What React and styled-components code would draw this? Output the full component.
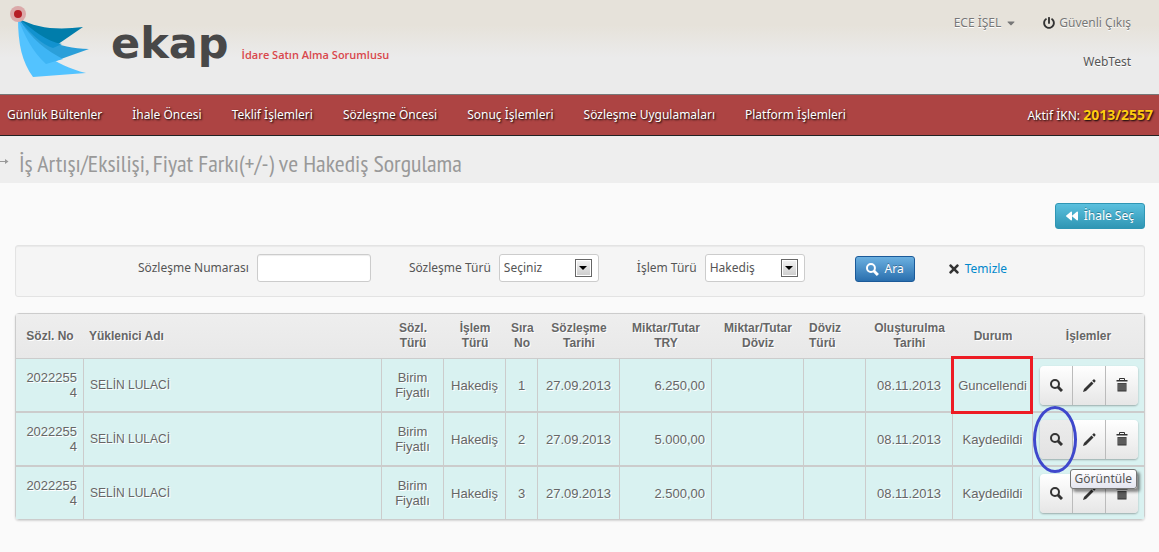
import React from "react";
import styled, { createGlobalStyle } from "styled-components";
import {
  FaBackward,
  FaCaretDown,
  FaPowerOff,
  FaTimes,
} from "react-icons/fa";

const GlobalStyle = createGlobalStyle`
  * {
    box-sizing: border-box;
  }

  body {
    margin: 0;
    background: #fafafa;
    color: #555;
    font-family: "Noto Sans", "Open Sans", sans-serif;
    font-size: 12px;
    line-height: 20px;
  }
`;

const Header = styled.header`
  display: flex;
  height: 94px;
  padding: 6px 28px 0 9px;
  background: linear-gradient(#e6e2da, #e6e2da 25px, #ebebeb 58px);
`;

const Brand = styled.a`
  display: flex;
  color: #484848;
  text-decoration: none;
`;

const BrandName = styled.span`
  margin: 12px 0 0 21px;
  font-family: "DejaVu Sans", sans-serif;
  font-weight: bold;
  font-size: 43px;
  line-height: 50px;
`;

const Role = styled.span`
  margin: 39px 0 0 13px;
  font-family: "Open Sans", sans-serif;
  font-weight: 600;
  font-size: 11px;
  color: #d9474c;
`;

const UserArea = styled.div`
  display: flex;
  flex-direction: column;
  align-items: flex-end;
  gap: 19px;
  margin-left: auto;
  padding-top: 7px;
  text-shadow: 0 1px 0 #fff;
`;

const UserLinks = styled.div`
  display: flex;
  gap: 26px;
`;

const UserLink = styled.a`
  display: flex;
  align-items: center;
  gap: 4px;
  color: #777;
  text-decoration: none;
`;

const Nav = styled.nav`
  display: flex;
  align-items: center;
  gap: 30px;
  height: 42px;
  padding: 0 6px 0 7px;
  background: #ad4443;
  border-top: 1px solid #777;
  border-bottom: 1px solid #222;
  color: #fff;
  text-shadow: 1px 1px 2px #000;
`;

const NavLink = styled.a`
  color: inherit;
  text-decoration: none;
  white-space: nowrap;
`;

const ActiveTender = styled.span`
  margin-left: auto;
  white-space: nowrap;

  strong {
    font-size: 14px;
    color: #fc1;
  }
`;

const TitleBar = styled.div`
  display: flex;
  align-items: center;
  gap: 10px;
  height: 47px;
  background: #eee;
  color: #999;

  svg {
    margin-top: 4px;
  }
`;

const Title = styled.h1`
  margin: 0;
  padding-top: 8px;
  font-family: "PT Sans Narrow", "Open Sans Condensed", "Roboto Condensed", Roboto, sans-serif;
  font-weight: normal;
  font-size: 24px;
  line-height: 30px;
`;

const Content = styled.main`
  padding: 20px 14px 30px 15px;
`;

const Toolbar = styled.div`
  display: flex;
  justify-content: flex-end;
  margin-bottom: 16px;
`;

const buttonColors = {
  info: "linear-gradient(#5bc0de, #2f96b4)",
  primary: "linear-gradient(#6bb0e0, #2a6fae)",
};

const Button = styled.button`
  display: flex;
  align-items: center;
  justify-content: center;
  gap: 6px;
  height: 26px;
  padding: 0 10px;
  border: 1px solid ${(props) => (props.$kind === "info" ? "#2f96b4" : "#1b5a99")};
  border-radius: 3px;
  background: ${(props) => buttonColors[props.$kind]};
  color: #fff;
  font: inherit;
  text-shadow: 0 -1px 0 rgba(0, 0, 0, 0.3);
  cursor: pointer;
`;

const Filters = styled.form`
  display: flex;
  align-items: flex-start;
  height: 52px;
  padding: 8px 16px 0 122px;
  border: 1px solid #e3e3e3;
  border-radius: 3px;
  background: #f5f5f5;
  box-shadow: inset 0 1px 1px rgba(0, 0, 0, 0.05);
`;

const Field = styled.div`
  display: flex;
  align-items: center;
  gap: 8px;
  margin-right: 38px;

  label {
    white-space: nowrap;
  }
`;

const TextInput = styled.input`
  width: 114px;
  height: 28px;
  padding: 0 5px;
  border: 1px solid #ccc;
  border-radius: 3px;
  background: #fff;
  box-shadow: inset 0 1px 1px rgba(0, 0, 0, 0.075);
  color: #555;
  font: inherit;
`;

const SelectBox = styled.div`
  position: relative;

  select {
    display: block;
    width: 100px;
    height: 28px;
    padding: 0 28px 0 4px;
    appearance: none;
    border: 1px solid #ccc;
    border-radius: 3px;
    background: #fff;
    color: #555;
    font: inherit;
  }
`;

const SelectArrow = styled.span`
  position: absolute;
  top: 5px;
  right: 7px;
  display: flex;
  align-items: center;
  justify-content: center;
  width: 17px;
  height: 18px;
  border: 1px solid #666;
  background: linear-gradient(#f4f4f4, #ccc);
  box-shadow: inset 0 0 0 1px #fff;
  pointer-events: none;
`;

const SearchButton = styled(Button)`
  width: 60px;
  margin: 2px 32px 0 12px;
`;

const ClearLink = styled.a`
  display: flex;
  align-items: center;
  gap: 4px;
  margin-top: 5px;
  color: #0088cc;
  text-decoration: none;

  svg {
    color: #333;
  }
`;

const TableFrame = styled.div`
  margin-top: 16px;
  border: 1px solid #ccc;
  border-radius: 4px;
  box-shadow: 0 1px 2px rgba(0, 0, 0, 0.15);
`;

const Table = styled.table`
  width: 100%;
  table-layout: fixed;
  border-collapse: separate;
  border-spacing: 0;
  font-family: "Liberation Sans", Arial, sans-serif;
  font-size: 13px;
  line-height: 15px;
  color: #666;
  text-shadow: 1px 1px 0 #fff;
`;

const HeadCell = styled.th`
  height: 45px;
  padding: 0 5px;
  border-bottom: 1px solid #ccc;
  background: linear-gradient(#eee, #e8e8e8);
  font-size: 12px;
  text-align: ${(props) => props.$align || "center"};
`;

const Cell = styled.td`
  position: relative;
  height: 54px;
  padding: 0 6px;
  border-right: 1px solid #ccc;
  border-bottom: 2px solid #ccc;
  background: #d9f2f1;
  text-align: ${(props) => props.$align || "center"};
  overflow-wrap: anywhere;

  &:last-child {
    border-right: 0;
  }

  tr:last-child > & {
    height: 52px;
    border-bottom: 0;
  }
`;

const NumberCell = styled(Cell)`
  padding-left: 9px;
`;

const NameCell = styled(Cell)`
  font-size: 12px;
`;

const ActionCell = styled(Cell)`
  padding: 0 6px 0 7px;
`;

const StatusCell = styled(Cell)`
  padding: 0 2px;
`;

const StatusMark = styled.span`
  position: absolute;
  inset: -3px -1px -3px -2px;
  border: 3px solid #ed1c24;
  z-index: 1;
`;

const ActionGroup = styled.div`
  display: flex;
  border-radius: 4px;
  box-shadow: 0 1px 2px rgba(0, 0, 0, 0.3);
`;

const ActionButton = styled.button`
  display: flex;
  flex: 1;
  align-items: center;
  justify-content: center;
  height: 39px;
  padding: 0;
  border: 0;
  border-right: 1px solid #bbb;
  background: ${(props) =>
    props.$hovered
      ? "linear-gradient(#ececec, #e2e2e2)"
      : "linear-gradient(#fff, #e6e6e6)"};
  color: #333;
  cursor: pointer;

  &:first-child {
    border-radius: 4px 0 0 4px;
  }

  &:last-child {
    border-right: 0;
    border-radius: 0 4px 4px 0;
  }
`;

const ButtonMark = styled.span`
  position: absolute;
  top: -7px;
  left: 0;
  width: 44px;
  height: 67px;
  border: 3px solid #3f48cc;
  border-radius: 50%;
  z-index: 1;
  pointer-events: none;
`;

const Tooltip = styled.span`
  position: absolute;
  top: 56px;
  right: 7px;
  padding: 0 4px;
  border: 1px solid #767676;
  border-radius: 3px;
  background: linear-gradient(#fff, #e4e5f0);
  box-shadow: 3px 3px 3px rgba(0, 0, 0, 0.45);
  color: #555;
  font-family: "Noto Sans", sans-serif;
  font-size: 12px;
  line-height: 18px;
  text-shadow: none;
  z-index: 2;
`;

const menu = [
  "Günlük Bültenler",
  "İhale Öncesi",
  "Teklif İşlemleri",
  "Sözleşme Öncesi",
  "Sonuç İşlemleri",
  "Sözleşme Uygulamaları",
  "Platform İşlemleri",
];

const columns = [
  { title: "Sözl. No", width: 68 },
  { title: "Yüklenici Adı", align: "left" },
  { title: "Sözl. Türü", width: 62 },
  { title: "İşlem Türü", width: 62 },
  { title: "Sıra No", width: 32 },
  { title: "Sözleşme Tarihi", width: 82 },
  { title: "Miktar/Tutar TRY", width: 92 },
  { title: "Miktar/Tutar Döviz", width: 92 },
  { title: "Döviz Türü", width: 62, align: "left" },
  { title: "Oluşturulma Tarihi", width: 87 },
  { title: "Durum", width: 80 },
  { title: "İşlemler", width: 111 },
];

const rows = [
  { order: 1, amount: "6.250,00", status: "Guncellendi", marked: true },
  { order: 2, amount: "5.000,00", status: "Kaydedildi", hovered: true },
  { order: 3, amount: "2.500,00", status: "Kaydedildi" },
];

function Logo() {
  return (
    <svg width="81" height="72" viewBox="0 0 81 72" aria-hidden="true">
      <path d="M9 12 C28 23 50 24 74 21 L42 43 Z" fill="#007dab" />
      <path d="M9 12 C26 31 48 42 80 43 L38 58 Z" fill="#2b9fd9" />
      <path d="M9 12 C24 24 38 36 53 38 L44 42 C34 39 20 27 9 12 Z" fill="#1292cf" />
      <path d="M9 12 C22 42 45 59 77 67 L24 71 C13 56 9 38 9 12 Z" fill="#53c3ff" />
      <path d="M9 12 C23 34 38 45 54 53 L37 58 C23 45 15 29 9 12 Z" fill="#3eb5f5" />
      <circle cx="9" cy="8" r="8" fill="#dba9a9" />
      <circle cx="9" cy="8" r="4" fill="#b51d25" />
    </svg>
  );
}

function Search() {
  return (
    <svg width="13" height="13" viewBox="0 0 13 13" fill="none" stroke="currentColor" aria-hidden="true">
      <circle cx="5" cy="5" r="4" strokeWidth="2" />
      <path d="M8 8 L12 12" strokeWidth="3" />
    </svg>
  );
}

function Pencil() {
  return (
    <svg width="13" height="13" viewBox="0 0 13 13" fill="currentColor" aria-hidden="true">
      <path d="M0 13 L1 10 L8.5 2.5 L10.5 4.5 L3 12 Z" />
      <path d="M9.2 1.8 L10.4 0.6 Q11.2 0 12 0.9 Q13 1.8 12.4 2.6 L11.2 3.8 Z" />
    </svg>
  );
}

function Trash() {
  return (
    <svg width="12" height="14" viewBox="0 0 12 14" aria-hidden="true">
      <path d="M3.5 2 V0.5 H8.5 V2" fill="none" stroke="#333" />
      <path d="M0.5 2 H11.5 V3.5 H0.5 Z" fill="#333" />
      <path d="M1.5 5 H10.5 V13.5 H1.5 Z" fill="#333" />
      <path d="M3 5.5 V12.5 M5 5.5 V12.5 M7 5.5 V12.5 M9 5.5 V12.5" stroke="#aaa" strokeWidth="0.7" />
    </svg>
  );
}

function Select(props) {
  return (
    <Field>
      <label htmlFor={props.id}>{props.label}</label>
      <SelectBox>
        <select id={props.id}>
          <option>{props.value}</option>
        </select>
        <SelectArrow>
          <svg width="8" height="4" viewBox="0 0 8 4" aria-hidden="true">
            <path d="M0 0 H8 L4 4 Z" fill="#000" />
          </svg>
        </SelectArrow>
      </SelectBox>
    </Field>
  );
}

function Row({ data }) {
  return (
    <tr>
      <NumberCell $align="right">20222554</NumberCell>
      <NameCell $align="left">SELİN LULACİ</NameCell>
      <Cell>Birim Fiyatlı</Cell>
      <Cell>Hakediş</Cell>
      <Cell>{data.order}</Cell>
      <Cell>27.09.2013</Cell>
      <Cell $align="right">{data.amount}</Cell>
      <Cell />
      <Cell />
      <Cell>08.11.2013</Cell>
      <StatusCell>
        {data.status}
        {data.marked && <StatusMark />}
      </StatusCell>
      <ActionCell>
        <ActionGroup>
          <ActionButton type="button" aria-label="Görüntüle" $hovered={data.hovered}>
            <Search />
          </ActionButton>
          <ActionButton type="button" aria-label="Düzenle">
            <Pencil />
          </ActionButton>
          <ActionButton type="button" aria-label="Sil">
            <Trash />
          </ActionButton>
        </ActionGroup>
        {data.hovered && <ButtonMark />}
        {data.hovered && <Tooltip role="tooltip">Görüntüle</Tooltip>}
      </ActionCell>
    </tr>
  );
}

function App() {
  return (
    <>
      <GlobalStyle />
      <Header>
        <Brand href="#">
          <Logo />
          <BrandName>ekap</BrandName>
        </Brand>
        <Role>İdare Satın Alma Sorumlusu</Role>
        <UserArea>
          <UserLinks>
            <UserLink href="#">
              ECE İŞEL <FaCaretDown size={12} />
            </UserLink>
            <UserLink href="#">
              <FaPowerOff size={12} color="#333" /> Güvenli Çıkış
            </UserLink>
          </UserLinks>
          <span>WebTest</span>
        </UserArea>
      </Header>
      <Nav>
        {menu.map((item) => (
          <NavLink href="#" key={item}>
            {item}
          </NavLink>
        ))}
        <ActiveTender>
          Aktif İKN: <strong>2013/2557</strong>
        </ActiveTender>
      </Nav>
      <TitleBar>
        <svg width="9" height="7" viewBox="0 0 9 7" aria-hidden="true">
          <path d="M0 3.5 H7" stroke="#999" />
          <path d="M5 1 L8.5 3.5 L5 6 Z" fill="#999" />
        </svg>
        <Title>İş Artışı/Eksilişi, Fiyat Farkı(+/-) ve Hakediş Sorgulama</Title>
      </TitleBar>
      <Content>
        <Toolbar>
          <Button type="button" $kind="info">
            <FaBackward size={12} /> İhale Seç
          </Button>
        </Toolbar>
        <Filters onSubmit={(e) => e.preventDefault()}>
          <Field>
            <label htmlFor="number">Sözleşme Numarası</label>
            <TextInput id="number" type="text" />
          </Field>
          <Select id="contract" label="Sözleşme Türü" value="Seçiniz" />
          <Select id="operation" label="İşlem Türü" value="Hakediş" />
          <SearchButton type="submit" $kind="primary">
            <Search /> Ara
          </SearchButton>
          <ClearLink href="#">
            <FaTimes size={14} /> Temizle
          </ClearLink>
        </Filters>
        <TableFrame>
          <Table>
            <colgroup>
              {columns.map((column) => (
                <col key={column.title} width={column.width} />
              ))}
            </colgroup>
            <thead>
              <tr>
                {columns.map((column) => (
                  <HeadCell key={column.title} $align={column.align}>
                    {column.title}
                  </HeadCell>
                ))}
              </tr>
            </thead>
            <tbody>
              {rows.map((row) => (
                <Row key={row.order} data={row} />
              ))}
            </tbody>
          </Table>
        </TableFrame>
      </Content>
    </>
  );
}

export default App;
